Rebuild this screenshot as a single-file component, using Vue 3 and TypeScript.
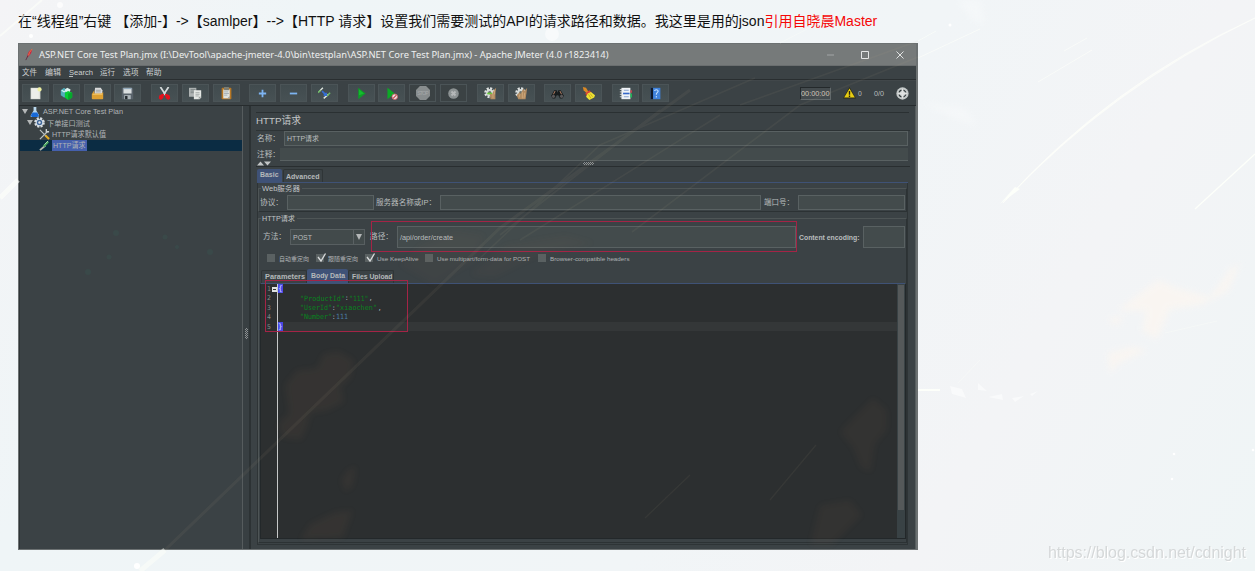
<script setup lang="ts">
import { h } from 'vue'

interface FitProps { t: string; w: number; s?: number }

// One line of text fitted to an exact advance width.
const Fit = (p: FitProps) => {
  const s = Number(p.s ?? 7.5)
  return h('svg', { width: p.w, height: s * 1.5, class: 'fit' }, [
    h('text', { x: 0, y: s * 1.1, 'font-size': s, textLength: p.w, lengthAdjust: 'spacingAndGlyphs', 'xml:space': 'preserve' }, p.t),
  ])
}
Fit.props = ['t', 'w', 's']

const gear = '<circle cx="7" cy="7" r="5" fill="none" stroke="#dfe3e2" stroke-width="3.4" stroke-dasharray="2.4 1.5"/><circle cx="7" cy="7" r="4.4" fill="#d5dad8"/><circle cx="7" cy="7" r="2" fill="#66716d"/>'
const icons: Record<string, string> = {
  file: '<path d="M2 1h12v14H2z" fill="#dfe1dc"/><path d="M3 2h9v12H3z" fill="#eceeea"/><circle cx="13" cy="3" r="2.6" fill="#eef0a0"/>',
  templates: '<path d="M1 4l4-3 4 3v8l-4 1-4-3z" fill="#51aebb"/><path d="M6 3l3-2 4 2-1 3H7z" fill="#d9f0ed"/><path d="M6 7l4-2 5 2v6l-5 3-4-3z" fill="#08cf37"/><path d="M10 8l5-1v6l-5 3z" fill="#06a82c"/><path d="M2 4l3 2 3-2" stroke="#d5f3f2" stroke-width="1.5" fill="none"/>',
  open: '<path d="M5 1h7l2 3v6H4z" fill="#d9dada"/><path d="M6 4h6M6 6h6" stroke="#969b9d"/><path d="M2 7l2-3v4h9l2-2v8q0 1-1 1H2q-1 0-1-1V9z" fill="#dda032"/><path d="M2 9h12" stroke="#f5cb6d"/>',
  save: '<path d="M1 1h13l1 2v12H1z" fill="#59636b"/><path d="M3 1h10v7H3z" fill="#d9dedf"/><path d="M3 2h10" stroke="#7290aa"/><path d="M4 10h8v5H4z" fill="#adb6bb"/><path d="M5 11h3v4H5z" fill="#252b2f"/>',
  cut: '<path d="M3 0l6.500 10M13 0L6.500 10" stroke="#d5dadb" stroke-width="2.200"/><path d="M7.500 8.500l-1 5-3 2.500-2.500-2 .5-3.500 3.500-2zM8.500 8.500l1 5 3 2.500 2.500-2-.5-3.500-3.500-2z" fill="#e4101c"/>',
  copy: '<path d="M0 1h9v11H0z" fill="#aeb3b3"/><path d="M2 3h6M2 5h5M2 7h5" stroke="#788080"/><path d="M6 4h9v9l-2 2H6z" fill="#e4e7e4"/><path d="M8 7h5M8 9h5M8 11h4" stroke="#9ba1a0"/><path d="M15 12h-3v3" fill="#989e9d"/>',
  paste: '<rect x="2" y="1" width="12" height="14" rx="1" fill="#b77724"/><path d="M4 3h8v11H4z" fill="#dfe2df"/><path d="M5 0h6v4H5z" fill="#7c7d72"/><path d="M5 6h5M5 8h6M5 10h4" stroke="#9da6ae"/><path d="M12 11v3H9z" fill="#979b99"/>',
  plus: '<path d="M8 3.500v9M3.500 8h9" stroke="#7db4f2" stroke-width="2.200"/>',
  minus: '<path d="M3.500 8h9" stroke="#7db4f2" stroke-width="2.200"/>',
  toggle: '<path d="M1 6l5-5M7 14l6-5" stroke="#e0e8e1" stroke-width="1.700"/><path d="M0 7l3-3M11 11l4-4" stroke="#6fbd66" stroke-width="1.700"/><path d="M5 5l5 5M7 10h3V7" stroke="#356dd2" stroke-width="2" fill="none"/>',
  play: '<path d="M4 1l9 7-9 7z" fill="#0d9d27"/><path d="M5 3l6 5-6 2z" fill="#14bd2d"/>',
  playnow: '<path d="M3 1l9 7-9 7z" fill="#0caa26"/><circle cx="12" cy="12" r="3.4" fill="#e5e2e2" stroke="#d45960" stroke-width="1"/><path d="M10 14l4-4" stroke="#c93c45" stroke-width="1.4"/>',
  stop: '<path d="M4.500 0h7L16 4.500v7L11.500 16h-7L0 11.500v-7z" fill="#888d8e"/><text x="1.500" y="10.500" font-size="6" fill="#a5a9aa" font-family="Liberation Sans" textLength="13">STOP</text>',
  shut: '<circle cx="8" cy="8" r="6.500" fill="#8c9293"/><path d="M5.500 5.500l5 5M10.500 5.500l-5 5" stroke="#b5b8b9" stroke-width="2.400"/>',
  clear: gear + '<path d="M4 7h6v2H4z" fill="#62cf35"/><path d="M7 8l3 1 2-5 3-3-1 6v8H8z" fill="#b18b61"/><path d="M11 8v6M13 4v5" stroke="#d0aa7a"/>',
  clearall: gear + '<path d="M2 10l4-4 1 3 2-5 2-2 1 3 3-4-1 7-1 7H4z" fill="#b08a60"/><path d="M6 9l-1 4M9 6v8M12 7l-1 7" stroke="#d0ad80"/>',
  find: '<path d="M4 4h3l1 3 1-3h3l4 7-2 3h-3l-2-4H7l-2 4H2l-2-3z" fill="#171c1d"/><path d="M5 5l-2 4M11 5l2 4" stroke="#b88165" stroke-width="1.2"/><circle cx="3" cy="11.5" r="2" fill="#59585a"/><circle cx="13" cy="11.5" r="2" fill="#59585a"/>',
  broom: '<path d="M1 0l4 1 3 5-2 2-4-4z" fill="#d98825"/><path d="M4 8l5-4 3 3-6 4z" fill="#d94337"/><path d="M7 8l4-2 5 4-1 3-6 3-4-4z" fill="#eee333"/><path d="M10 8l3 4M8 9l3 5" stroke="#bf9f17"/>',
  list: '<path d="M3 1h11v14H3z" fill="#f0f3f6"/><path d="M1 3h4M1 6h4M1 9h4M1 12h4" stroke="#e2e5e7"/><path d="M6 4h6M6 12h6" stroke="#7393c8"/><path d="M5 8h8" stroke="#3567c9" stroke-width="2"/><path d="M14 4h2v3h-2z" fill="#c34452"/><path d="M14 8h2v5h-2z" fill="#1db657"/>',
  help: '<path d="M2 1h12v14H2z" fill="#3f82dc"/><path d="M2 1h3v14H2z" fill="#111a29"/><path d="M7 5q0-1.500 2-1.500T11.300 5q0 1-1.200 2T9 9.500M9 11v2" stroke="#c4e0ff" stroke-width="1.3" fill="none"/>',
}
const groups: string[][] = [
  ['file', 'templates', 'open', 'save'],
  ['cut', 'copy', 'paste'],
  ['plus', 'minus', 'toggle'],
  ['play', 'playnow', 'stop', 'shut'],
  ['clear', 'clearall'],
  ['find', 'broom'],
  ['list', 'help'],
]
const menus: [string, number, number][] = [['文件', 15, 22], ['编辑', 16, 45], ['Search', 24, 68.5], ['运行', 15, 100], ['选项', 15.5, 122.5], ['帮助', 15.5, 146]]
const menuGap = (i: number) => (i === 0 ? menus[0][2] - 19 : menus[i][2] - menus[i - 1][2] - menus[i - 1][1])
const checks = [
  { t: '自动重定向', w: 30, on: false, cell: 49.5 },
  { t: '跟随重定向', w: 30, on: true, cell: 48.7 },
  { t: 'Use KeepAlive', w: 41.5, on: true, cell: 60.8 },
  { t: 'Use multipart/form-data for POST', w: 93, on: false, cell: 112.5 },
  { t: 'Browser-compatible headers', w: 79.5, on: false, cell: 100 },
]
</script>

<template>
  <main class="page">
    <p class="intro">在“线程组”右键 【添加-】-&gt;【samlper】--&gt;【HTTP 请求】设置我们需要测试的API的请求路径和数据。我这里是用的json<span>引用自晓晨Master</span></p>

    <section class="window">
      <header class="title">
        <svg class="feather" viewBox="0 0 10 14"><path d="M9 0Q3 3 3 9l-1 2Q8 8 9 0z" fill="#cf2440" /><path d="M9 0Q5 4 4 9" stroke="#e6864c" fill="none" /><path d="M4 8l-3 6" stroke="#5a2940" /></svg>
        <Fit t="ASP.NET Core Test Plan.jmx (I:\DevTool\apache-jmeter-4.0\bin\testplan\ASP.NET Core Test Plan.jmx) - Apache JMeter (4.0 r1823414)" :w="569.5" :s="9.5" />
        <div class="winbtns">
          <svg width="7" height="8"><path d="M0 4h7" stroke="#a2a5a6" /></svg>
          <svg width="8" height="8"><path d="M.5.5h7v7h-7z" stroke="#e4e6e6" fill="none" /></svg>
          <svg width="8" height="8"><path d="M.5.5l7 7M7.5.5l-7 7" stroke="#e0e2e2" fill="none" /></svg>
        </div>
      </header>

      <nav class="menu">
        <div v-for="(m, i) in menus" :key="m[0]" :style="{ marginLeft: menuGap(i) + 'px' }" :class="{ mn: m[0] === 'Search' }"><Fit :t="m[0]" :w="m[1]" :s="7.6" /></div>
      </nav>

      <div class="toolbar">
        <div v-for="(g, i) in groups" :key="i" class="group">
          <span v-for="n in g" :key="n" class="btn" :class="{ off: n === 'stop' || n === 'shut' }"><svg viewBox="0 0 16 16" :class="{ big: n === 'stop' }" v-html="icons[n]" /></span>
        </div>
        <div class="status">
          <span class="timer"><Fit t="00:00:00" :w="28.5" :s="7.2" /></span>
          <svg class="warn" viewBox="0 0 14 13"><path d="M7 0l7 12.5H0z" fill="#2c2b14" /><path d="M7 1.5l5.8 10H1.2z" fill="#e8cd13" /><path d="M7 4.2v4.2M7 9.2v1.5" stroke="#252415" stroke-width="1.5" /></svg>
          <Fit class="n1" t="0" :w="3.8" :s="7" />
          <Fit class="n2" t="0/0" :w="10" :s="7" />
          <svg class="target" viewBox="0 0 14 14"><circle cx="7" cy="7" r="6.6" fill="#c4c9c9" /><circle cx="7" cy="7" r="3.7" fill="none" stroke="#30383a" stroke-width="1.3" /><path d="M7 2v10M2 7h10" stroke="#e2e4e3" stroke-width="2" /></svg>
        </div>
      </div>

      <div class="body">
        <aside class="tree">
          <div class="row r0"><i class="tri" /><svg class="ic" viewBox="0 0 12 12"><path d="M5 1h3v4l3 5q0 2-2 2H3q-2 0-1-2l3-5z" fill="#b9d8ee" /><path d="M4 7h5l2 4-2 1H3L2 10z" fill="#1769d8" /></svg><Fit t="ASP.NET Core Test Plan" :w="80" /></div>
          <div class="row r1"><i class="tri" /><svg class="ic" viewBox="0 0 12 12"><circle cx="6" cy="6" r="4.5" fill="none" stroke="#d9dfe4" stroke-width="2.6" stroke-dasharray="2.2 1.35" /><circle cx="6" cy="6" r="3.6" fill="#42699c" stroke="#dbe2e7" stroke-width="1.2" /><circle cx="6" cy="6" r="1.3" fill="#dfe4e8" /></svg><Fit t="下单接口测试" :w="43" :s="7.2" /></div>
          <div class="row r2"><svg class="ic" viewBox="0 0 12 12"><path d="M1 1l7 7M1 11l8-8" stroke="#bac0c1" stroke-width="1.3" /><path d="M8 0v3l3 0" stroke="#cfd3d3" stroke-width="1.5" fill="none" /><path d="M7 7l4 4" stroke="#e6ad20" stroke-width="2.2" /></svg><Fit t="HTTP请求默认值" :w="54" /></div>
          <div class="row r2 sel"><svg class="ic" viewBox="0 0 12 12"><path d="M1 11l6-5" stroke="#b6b8ad" stroke-width="2" /><path d="M5 7l5-5" stroke="#49a45e" stroke-width="2.4" /><path d="M6 5l4-4" stroke="#bce3b7" /></svg><span class="hl"><Fit t="HTTP请求" :w="32.5" /></span></div>
        </aside>

        <div class="divider"><i class="grip" /></div>

        <section class="main">
          <h2 class="head"><Fit t="HTTP请求" :w="45" :s="9.8" /></h2>
          <div class="field-row name"><Fit class="l28" t="名称：" :w="23" /><div class="input"><Fit t="HTTP请求" :w="32" :s="7.3" /></div></div>
          <div class="field-row note"><Fit class="l24" t="注释：" :w="23" /><div class="input plain" /></div>
          <div class="split">
            <svg width="14" height="5"><path d="M0 4.5L3.5.5 7 4.5zM7 .5h7L10.500 4.5z" fill="#c2c5c6" /></svg>
            <i class="hgrip" />
          </div>

          <div class="tabs top"><span class="tab on t-basic"><Fit t="Basic" :w="18.5" :s="7.3" /></span><span class="tab t-adv"><Fit t="Advanced" :w="33.5" :s="7.3" /></span></div>

          <div class="pane">
            <fieldset class="web">
              <legend><Fit t="Web服务器" :w="38" :s="7.3" /></legend>
              <div class="webrow">
                <Fit t="协议：" :w="23" /><div class="input w1" />
                <Fit class="b2" t="服务器名称或IP：" :w="60" /><div class="input w2" />
                <Fit class="b3" t="端口号：" :w="30" /><div class="input w3" />
              </div>
            </fieldset>

            <fieldset class="http">
              <legend><Fit t="HTTP请求" :w="33" :s="7.3" /></legend>
              <div class="reqrow">
                <Fit t="方法：" :w="23" />
                <div class="select"><Fit t="POST" :w="19" :s="7.2" /><b><i class="tri" /></b></div>
                <div class="path">
                  <Fit t="路径：" :w="23" />
                  <div class="input"><Fit t="/api/order/create" :w="53" :s="7.2" /></div>
                  <i class="mark" />
                </div>
                <Fit class="enc bold" t="Content encoding:" :w="60.5" :s="7.2" />
                <div class="input w4" />
              </div>
              <div class="checks">
                <label v-for="c in checks" :key="c.t" :style="{ width: c.cell + 'px' }"><i class="box"><svg v-if="c.on" viewBox="0 0 10 10"><path d="M2 4l3 4L9.500 .500" stroke="#d8dbdc" stroke-width="1.3" fill="none" /></svg></i><Fit :t="c.t" :w="c.w" :s="6.1" /></label>
              </div>
              <div class="tabs low"><span class="tab t-par"><Fit t="Parameters" :w="40" :s="7.3" /></span><span class="tab on t-body"><Fit t="Body Data" :w="34" :s="7.3" /></span><span class="tab t-files"><Fit t="Files Upload" :w="40.500" :s="7.3" /></span></div>
              <div class="editor">
                <ol class="gutter"><li v-for="n in 5" :key="n">{{ n }}</li></ol>
                <div class="code">
                  <div><em>{</em></div>
                  <div class="in"><Fit class="str" t="&quot;ProductId&quot;" :w="45" :s="7.2" /><Fit t=":" :w="3.5" :s="6.6" /><Fit class="str" t="&quot;111&quot;" :w="19.500" :s="7.2" /><Fit t="," :w="3.5" :s="6.6" /></div>
                  <div class="in"><Fit class="str" t="&quot;UserId&quot;" :w="32" :s="7.2" /><Fit t=":" :w="3.5" :s="6.6" /><Fit class="str" t="&quot;xiaochen&quot;" :w="41" :s="7.2" /><Fit t="," :w="3.5" :s="6.6" /></div>
                  <div class="in"><Fit class="str" t="&quot;Number&quot;" :w="32" :s="7.2" /><Fit t=":" :w="3.5" :s="6.6" /><Fit class="num" t="111" :w="12" :s="7.2" /></div>
                  <div class="cur"><em>}</em></div>
                </div>
                <div class="scroll"><i /></div>
                <i class="fold" />
                <i class="mark body-mark" />
              </div>
            </fieldset>
          </div>
        </section>
      </div>
    </section>

    <svg class="sky" viewBox="0 0 1255 571" width="1255" height="571">
      <defs>
        <filter id="soft" x="-20%" y="-20%" width="140%" height="140%"><feGaussianBlur stdDeviation="3" /></filter>
        <filter id="fine" x="-20%" y="-20%" width="140%" height="140%"><feGaussianBlur stdDeviation=".7" /></filter>
        <linearGradient id="tail" x1="0" y1="1" x2="1" y2="0"><stop offset="0" stop-color="#fffffa" /><stop offset="1" stop-color="#fffffa" stop-opacity=".3" /></linearGradient>
      </defs>
      <g filter="url(#soft)" fill="#b07c58" opacity=".07">
        <path d="M285 385l12-15 20-2 6-14 15-3 16 9-3 18-10 8 3 16-17 9-16 2-4 15-6 12-18-2-6-13 12-12z" />
        <path d="M348 470l8-4-3 20-8 6-4-12zM300 540l10-16 25-12 18-2-10 28z" />
        <path d="M840 432l15-16 18-18 14 12 0 20-12 14-4 28-10-4-8-20zM810 545l10-40 30-5 12 15-30 30z" opacity=".85" />
        <path d="M400 265l20-20 35-15 30 5-10 25-40 25zM470 275l35-30 60-10 30 8-60 14-40 20z" opacity=".6" />
      </g>
      <g filter="url(#soft)" fill="#fbf6f1" opacity=".8">
        <path d="M1158 280l22 9 30 8 20-28 10-6-12 28-28 14-30 4-13 30-15-8 4-20-28-1z" />
        <path d="M1108 353l24-6 15 3-28 13-9 10zM1110 318l12-1-2 6-9 1z" />
      </g>
      <path d="M957 0l16 21 12 3-5-24zM920 102l45 6 12 18-24-8z" fill="#fff" opacity=".25" filter="url(#soft)" />
      <path d="M1003 203Q1110 84 1255 18Q1110 88 1003 203z" fill="url(#tail)" stroke="#fdfffa" stroke-width=".6" filter="url(#fine)" />
      <path d="M1000 204l15-17 5 2z" fill="#fdfffa" filter="url(#fine)" />
      <g fill="none" stroke="#fdfffa" filter="url(#fine)">
        <path d="M1195 209L1255 154" stroke-width="1.300" />
        <path d="M1038 82L1092 50M1064 51L1087 38M918 58L980 29M918 41L936 31" opacity=".6" />
        <path d="M0 36L42 0" stroke-width="2" opacity=".6" />
        <path d="M0 198L18 180" stroke-width="5" opacity=".6" />
        <path d="M140 571L165 550" stroke-width="5" opacity=".5" />
        <path d="M918 390H940" stroke-width="2" />
        <path d="M958 383l22-23M1165 333l52-12" opacity=".35" />
        <path d="M780 43L840 12" opacity=".35" />
      </g>
      <g fill="none" stroke="#c4b894" opacity=".065" filter="url(#fine)">
        <path d="M165 550L500 228L690 90" stroke-width="3" />
        <path d="M478 260L600 145L755 78M500 235L660 110M520 240L720 115M632 232L800 105L918 57M740 105L918 41" stroke-width="1.600" />
        <path d="M645 518L690 475M770 500L816 445" stroke-width="1.300" />
      </g>
      <g fill="#fff">
        <g filter="url(#fine)"><circle cx="60" cy="5" r="3" opacity=".7" /><circle cx="31" cy="36" r="2" /><circle cx="552" cy="34" r="7" opacity=".5" /><circle cx="950" cy="25" r="1.500" /><circle cx="1174" cy="454" r="1.300" /><circle cx="1172" cy="479" r="1.300" /><circle cx="1253" cy="450" r="1.300" /><circle cx="137" cy="566" r="3" /></g>
        <path d="M950 386l12 3 4 9-14-4zM978 383l9 8-9-1zM988 397l14-3 1 6zM1012 398l12-2-9 6zM1030 394l8-3-6 5z" opacity=".5" filter="url(#fine)" />
      </g>
      <g fill="#328a72" opacity=".1"><circle cx="116" cy="233" r="3" /><circle cx="165" cy="237" r="2.500" /><circle cx="109" cy="257" r="2.500" /><circle cx="177" cy="247" r="2" /><circle cx="210" cy="252" r="3" /><circle cx="88" cy="272" r="3" /></g>
    </svg>
    <svg class="watermark" width="200" height="24"><text x="1" y="17.500" textLength="198" fill="#d5d8d9" class="wm">https://blog.csdn.net/cdnight</text></svg>
  </main>
</template>

<style>
html, body { margin: 0; overflow: hidden; }
</style>

<style scoped>
* { box-sizing: border-box; }
.page { position: relative; width: 1255px; height: 571px; overflow: hidden; padding: 10px 18px 0; background: linear-gradient(120deg, #f4f4f6 0, #eff5f7 20%, #f0f5f7 38%, #f1f5f7 60%, #f3f4f6 78%, #eff5f6 100%); font-family: "Liberation Sans", "Noto Sans CJK SC", sans-serif; color: #b9bdbe; }
.intro { margin: 0; height: 33px; font-size: 14px; line-height: 22px; color: #111; white-space: nowrap; }
.intro span { color: #f50808; }
.fit { display: block; flex: none; overflow: visible; fill: currentColor; }
.bold { font-weight: bold; }
.window { width: 900px; height: 507px; border: 1px solid #6c7172; border-right-width: 2px; background: #3b4245; display: flex; flex-direction: column; }
.title { height: 22px; background: #767a7a; display: flex; align-items: center; color: #eef0f0; font-family: "Noto Sans", sans-serif; border-bottom: 1px solid #6a6e6f; padding-left: 6px; flex: none; }
.title > .fit { margin-top: 1px; }
.feather { width: 8px; height: 13px; margin-right: 6px; }
.winbtns { margin-left: auto; display: flex; gap: 27px; padding-right: 12.500px; align-items: center; }
.menu { height: 14px; flex: none; display: flex; align-items: center; border-bottom: 1px solid #292e30; color: #cdd0d1; }
.mn { position: relative; }
.mn::after { content: ""; position: absolute; left: 0; bottom: 1px; width: 4px; height: 1px; background: #b9bdbe; }
.toolbar { height: 26px; flex: none; display: flex; gap: 9.700px; padding: 0 0 0 3px; align-items: center; border-bottom: 1px solid #272c2e; border-top: 1px solid #41474a; }
.group { display: flex; gap: 3.800px; }
.btn { width: 27px; height: 18px; display: flex; align-items: center; justify-content: center; background: linear-gradient(#414b4e, #475154); border: 1px solid #4b5457; }
.btn svg { width: 13px; height: 13px; flex: none; }
.btn svg.big { width: 14px; height: 14px; }
.btn.off { background: #3b4244; }
.status { margin-left: auto; display: flex; align-items: center; padding-right: 7.500px; }
.timer { width: 31px; height: 13px; border: 1px solid #24292b; border-right-color: #62696b; border-bottom-color: #62696b; background: #444b4e; display: flex; align-items: center; justify-content: center; color: #d2c5b8; }
.warn { width: 13px; height: 12px; margin-left: 12px; }
.n1 { margin-left: 2px; }
.n2 { margin-left: 11.500px; }
.target { width: 13px; height: 13px; margin-left: 12px; }
.body { flex: 1; display: flex; min-height: 0; }
.tree { width: 224px; border-right: 1px solid #565c5e; border-left: 1px solid #2e3436; color: #b0b4b6; }
.row { height: 11.300px; display: flex; align-items: center; }
.row .ic { width: 11px; height: 11px; flex: none; }
.tri { width: 0; height: 0; border: 3.200px solid transparent; border-top: 5px solid #b4b7b8; border-bottom: 0; }
.r0 { padding-left: 1.800px; }
.r0 .ic { margin: 0 2.500px 0 1.500px; }
.r1 { padding-left: 6.500px; }
.r1 .ic { margin: 0 2px 0 1.500px; }
.r2 { padding-left: 19px; }
.r2 .ic { margin-right: 2px; }
.sel { background: #0b2c43; }
.hl { width: 35px; background: #4560ad; }
.hl .fit { margin-left: .5px; }
.divider { width: 6px; background: #383f42; display: flex; align-items: center; justify-content: center; }
.grip, .hgrip { background: repeating-conic-gradient(#8b9092 0 25%, #3b4144 0 50%) 0 0 / 2px 2px; }
.grip { width: 3px; height: 11px; margin-top: 12px; }
.main { width: 667px; border-left: 2px solid #2c3234; border-right: 1px solid #565d5e; padding: 6px 5px 0; display: flex; flex-direction: column; margin-right: -1px; }
.head { margin: 0; font-weight: normal; border-top: 1px solid #2a3032; height: 18px; color: #c3c6c7; width: 653px; flex: none; }
.input { border: 1px solid #596162; background: #434b4c; display: flex; align-items: center; flex: none; }
.field-row { display: flex; align-items: center; flex: none; }
.name { height: 16px; border-top: 1px solid #2d3335; margin-bottom: 2px; }
.name .input { width: 624px; height: 15px; padding-left: 2px; margin-left: 4px; }
.name > .fit, .note > .fit { margin-left: 1px; }
.note { height: 13px; }
.note .input { width: 628px; height: 13px; border-width: 0 0 1px; }
.split { height: 6px; flex: none; display: flex; align-items: center; border-bottom: 1px solid #292e30; padding-left: 1px; width: 654px; }
.hgrip { width: 11px; height: 3px; margin-left: 312px; }
.tabs { display: flex; flex: none; font-weight: bold; color: #b5b9ba; border-bottom: 1px solid #3f5276; }
.top { margin: 2px 0 0 1px; height: 14px; width: 651px; }
.tab { height: 13px; display: flex; align-items: center; border: 1px solid #2f3537; border-bottom: 0; border-radius: 2px 2px 0 0; }
.tab.on { background: #3f5277; border: 0; padding-bottom: 2px; }
.t-basic { width: 25px; padding-left: 3px; }
.t-adv { width: 40px; padding-left: 2.500px; margin-left: .5px; }
.pane { margin-left: 1px; width: 651px; height: 362px; border: solid #2e3436; border-width: 0 1px 1px; padding: 0; }
fieldset { margin: 0 1px 0 0; padding: 0; border: 1px solid #4e5556; border-right-color: #2c3234; border-bottom-color: #2c3234; min-width: 0; width: 649px; }
legend { margin-left: 2px; padding: 0 2px 0 1px; height: 11px; color: #c1c4c5; }
.web { height: 29px; }
.webrow { display: flex; align-items: center; height: 15px; margin: 1px 0 0 1px; }
.webrow .input { height: 15px; }
.w1 { width: 86.500px; margin-left: 4px; }
.b2 { margin-left: 2px; }
.w2 { width: 321px; margin-left: 4.500px; }
.b3 { margin-left: 3px; }
.w3 { width: 107px; margin-left: 4px; }
.http { height: 330px; margin-top: 1px; }
.reqrow { display: flex; align-items: center; height: 22px; margin: 2px 0 0 4px; }
.select { width: 74.500px; height: 16px; border: 1px solid #585f61; background: #424a4b; margin-left: 4px; display: flex; align-items: center; padding-left: 1.500px; }
.select b { margin-left: auto; width: 11px; height: 14px; border-left: 1px solid #5a6163; display: flex; align-items: center; justify-content: center; }
.select .tri { border-width: 6px 3px 0; }
.path { position: relative; display: flex; align-items: center; margin-left: 5.500px; }
.path .input { width: 399px; height: 22px; margin-left: 4px; padding-left: 2px; }
.mark { position: absolute; border: 1px solid #a42446; }
.path .mark { left: .5px; top: -5px; right: -1px; height: 31px; }
.enc { margin-left: 3px; }
.w4 { width: 42px; height: 22px; margin-left: 3.500px; }
.checks { display: flex; height: 21px; align-items: center; padding-left: 7.500px; }
.checks label { display: flex; align-items: center; flex: none; color: #aeb2b4; }
.box { width: 8px; height: 8px; background: #5a6162; margin-right: 4px; }
.box svg { display: block; width: 10px; height: 10px; margin-top: -1px; overflow: visible; }
.low { height: 15px; margin-left: 2px; width: 644px; }
.low .tab { height: 13px; margin-top: 1px; padding-bottom: 1px; }
.low .tab.on { height: 14px; margin-top: 0; padding-bottom: 2px; }
.t-par { width: 46px; padding-left: 3px; }
.t-body { width: 41px; padding-left: 4px; }
.t-files { width: 46px; padding-left: 2.500px; }
.editor { position: relative; margin-left: 1px; width: 646px; height: 255px; background: #2c2f30; display: flex; border: 1px solid #23282a; border-top: 0; }
.gutter { list-style: none; margin: 0; padding: 1px 6px 0 0; width: 17px; height: 254px; border-right: 1px solid #c6c8c8; text-align: right; color: #84898a; font: 6.500px/9.400px "DejaVu Sans Mono", monospace; }
.code { flex: 1; font-family: "DejaVu Sans Mono", monospace; color: #b9bec2; }
.code > div { height: 9.400px; display: flex; align-items: center; gap: .5px; }
.code .in { padding-left: 21.500px; }
.code .cur { background: #343738; }
.str { color: #09821f; }
.num { color: #4b7ca6; }
em { font: bold 7.500px/9px "DejaVu Sans Mono", monospace; background: #4747e6; color: #b9bcff; width: 5px; height: 9px; }
.scroll { width: 8px; background: #394245; padding: 1px 1px 0; }
.scroll i { display: block; height: 225px; background: #55595a; }
.fold { position: absolute; left: 11px; top: 3px; width: 5px; height: 5px; background: linear-gradient(#333, #333) 1px 2px / 3px 1px no-repeat #e0e2e2; }
.body-mark { left: 4px; top: -4px; width: 143px; height: 52px; }
.sky { position: absolute; inset: 0; pointer-events: none; }
.watermark { position: absolute; left: 1047px; top: 540px; font-size: 16px; }
.wm { text-shadow: 1px 1px 0 #fff; }
</style>
